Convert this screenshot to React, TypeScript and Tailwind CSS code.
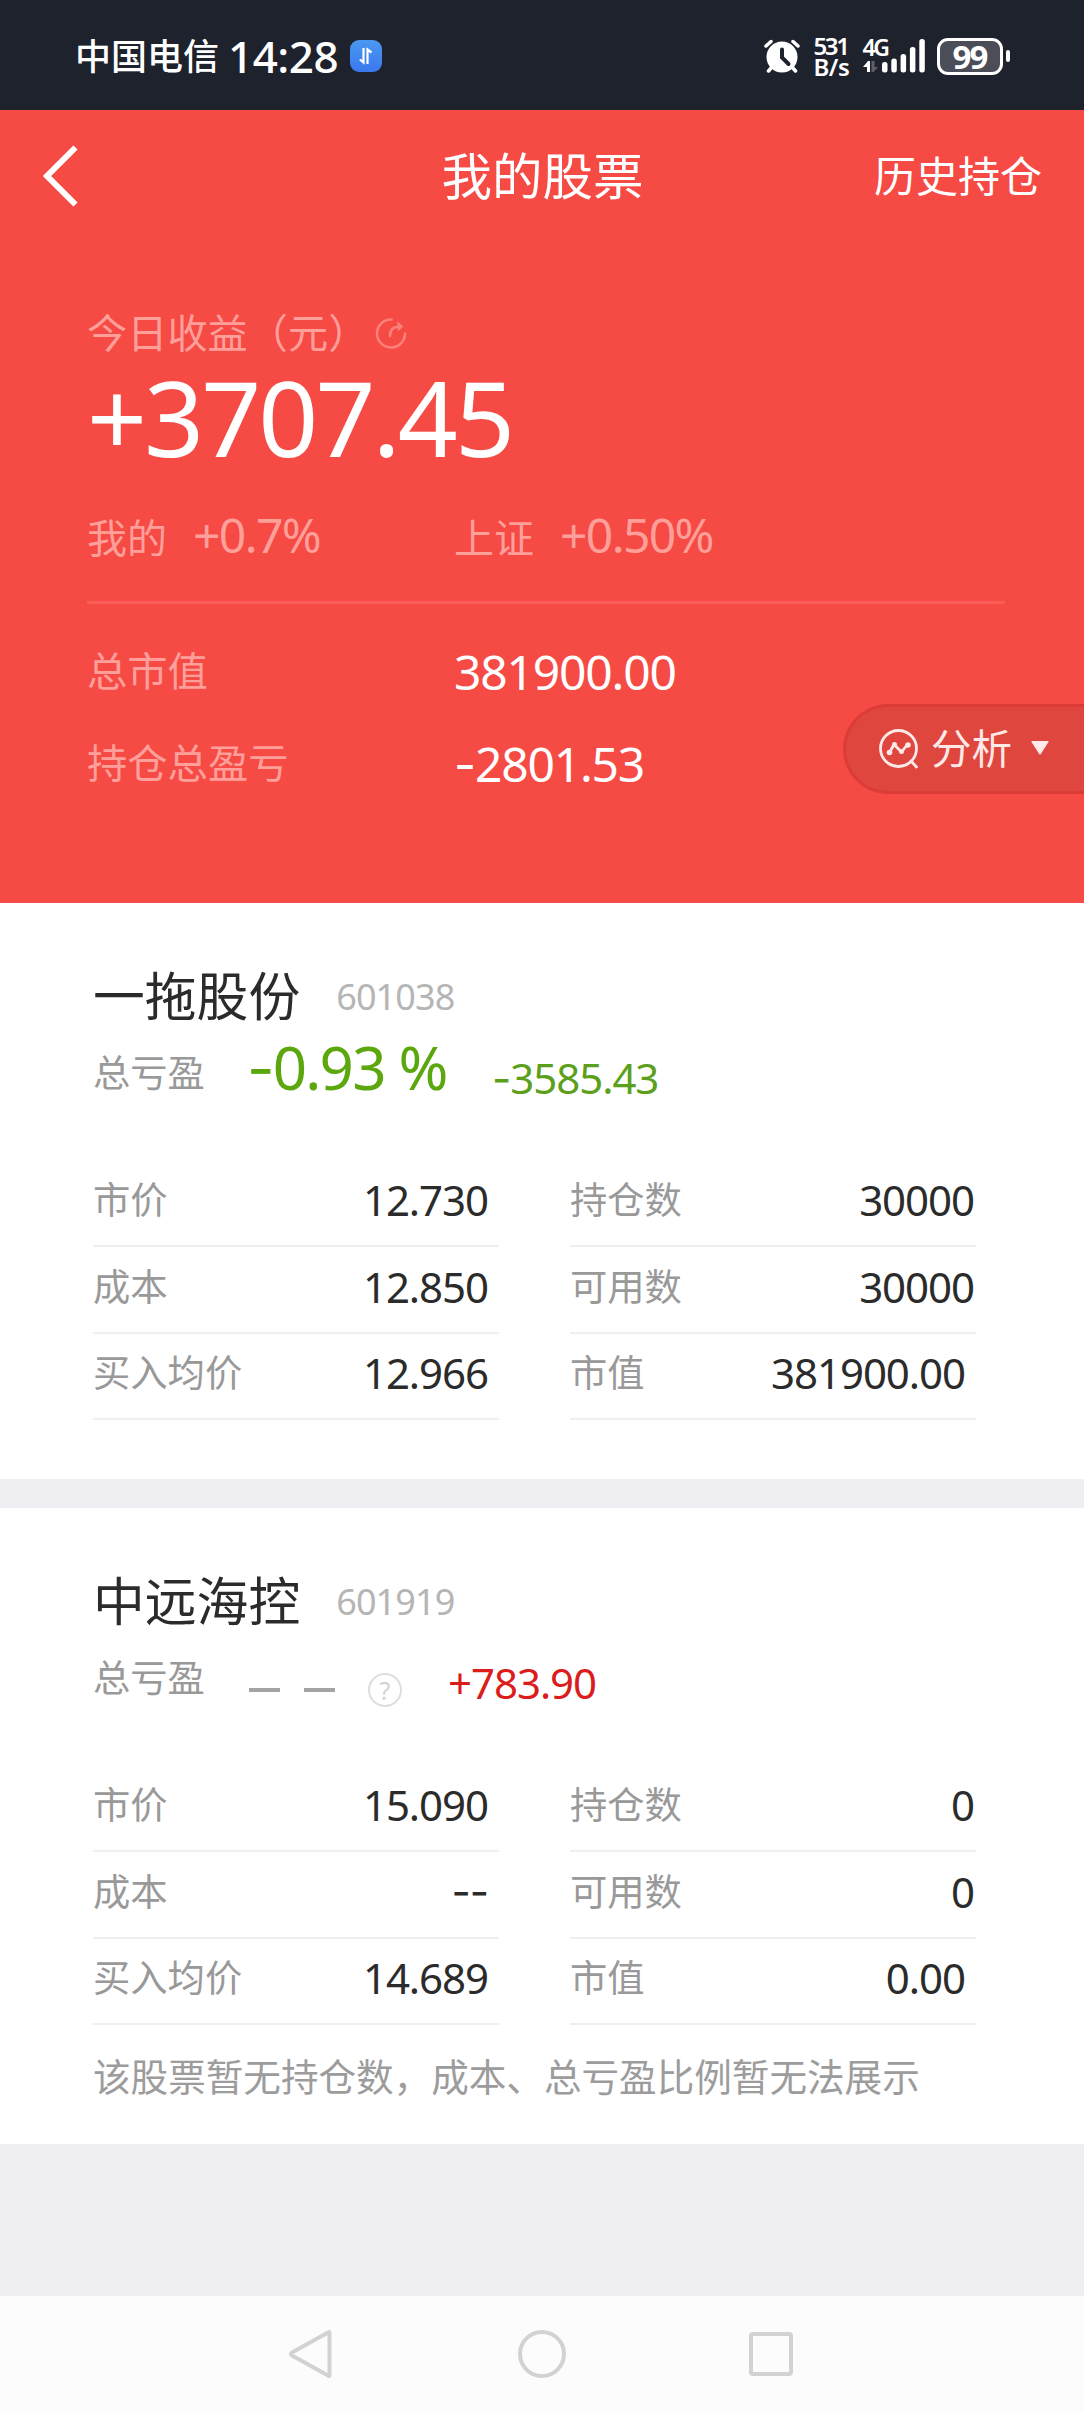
import React from "react";

type Cell = { label: string; value: string; inset?: boolean };

type Stock = {
  name: string;
  code: string;
  ratio: React.ReactNode;
  amount: string;
  amountClass: string;
  left: Cell[];
  right: Cell[];
  note?: string;
};

/** Figure whose minus signs are drawn with a wider, slightly raised dash. */
function Figure({ children }: { children: string }) {
  const dashes = children.match(/^-+/)?.[0] ?? "";
  return (
    <>
      {dashes && <span className="font-['Inter',sans-serif]">{dashes}</span>}
      {children.slice(dashes.length)}
    </>
  );
}

function AlarmIcon() {
  return (
    <svg width="36" height="34" viewBox="0 0 36 34" fill="none" stroke="#fff" strokeLinecap="round">
      <circle cx="18" cy="18" r="15.5" fill="#fff" stroke="none" />
      <path d="M2 7 L7 2.5 M34 7 L29 2.5" strokeWidth="3.5" />
      <path d="M8 28 L4.5 32 M28 28 L31.5 32" strokeWidth="3.5" />
      <path d="M18 10.5 V18.5 L24.5 25" stroke="#1e222c" strokeWidth="4" />
    </svg>
  );
}

function SignalIcon() {
  return (
    <svg width="62" height="34" viewBox="0 0 62 34" fill="#fff">
      <path d="M0 28 L5 22 H7 V33 H4 V28 Z" />
      <path d="M8.5 22 H11.5 V28 H15 L10.5 33 H8.5 Z" fill="#5d606a" />
      <rect x="19" y="23" width="5.5" height="10.500" rx="2.5" />
      <rect x="28.300" y="19.500" width="5.5" height="14" rx="2.5" />
      <rect x="37.600" y="15" width="5.5" height="18.500" rx="2.5" />
      <rect x="46.900" y="8" width="5.5" height="25.500" rx="2.5" />
      <rect x="56.300" y="0" width="5.500" height="33.500" rx="2.5" />
    </svg>
  );
}

function StatusBar() {
  return (
    <div className="flex h-[110px] items-center bg-[#1e222c] pt-[2px] pr-[74px] pl-[75px] text-white">
      <span className="mt-px text-[36px] leading-none font-medium">中国电信</span>
      <span className="ml-[9px] text-[44px] leading-none font-medium tracking-[-0.012em]">14:28</span>
      <span className="ml-[12px] flex size-8 items-center justify-center rounded-[9px] bg-linear-to-b from-[#4b98f0] to-[#3a78ee]">
        <svg width="14" height="18" viewBox="0 0 14 18" fill="none" stroke="#fff" strokeWidth="2.200">
          <path d="M4.500 1 V15.500 L0.800 12.500 M8.500 17 V2.500 L12.500 5.500" />
        </svg>
      </span>
      <div className="ml-auto flex items-center">
        <AlarmIcon />
        <div className="ml-[14px] flex w-[49px] flex-col text-[24px] leading-[21.500px] font-semibold tracking-[-0.1em]">
          <span>531</span>
          <span className="tracking-[-0.02em]">B/s</span>
        </div>
        <div className="relative">
          <SignalIcon />
          <span className="absolute -top-[4px] left-0 text-[23px] leading-6 font-semibold tracking-[-0.1em]">4G</span>
        </div>
        <div className="ml-[12px] flex h-[37px] w-[66px] items-center justify-center rounded-[11px] border-[3px] border-white bg-[#4b4e58] text-[33px] leading-none font-bold tracking-[-0.06em]">
          99
        </div>
        <div className="ml-[3px] h-[12px] w-[4.500px] rounded-full bg-white" />
      </div>
    </div>
  );
}

function SummaryRow({ label, value }: { label: string; value: string }) {
  return (
    <div className="flex h-[56px] items-center">
      <span className="w-[367px] text-[40.300px] leading-[56px] text-[#ff9f9a]">{label}</span>
      <span className="mt-[2px] text-[48px] leading-[56px] tracking-[-0.025em]">
        <Figure>{value}</Figure>
      </span>
    </div>
  );
}

function Rate({ label, value }: { label: string; value: string }) {
  return (
    <div className="flex h-[56px] w-[367px] items-baseline text-[#ff9f9a]">
      <span className="text-[40px] leading-[56px]">{label}</span>
      <span className="ml-[26px] text-[48px] leading-[56px] tracking-[-0.034em]">{value}</span>
    </div>
  );
}

function Summary() {
  return (
    <section className="relative h-[793px] bg-[#f64a45] text-white">
      <header className="grid h-[132px] grid-cols-3 items-center pr-[42px] pl-[43px]">
        <svg width="36" height="62" viewBox="0 0 36 62" fill="none" stroke="#fff" strokeWidth="6">
          <path d="M32.500 2.500 L4 31 L32.500 59.500" />
        </svg>
        <h1 className="justify-self-center text-[50.500px] leading-none whitespace-nowrap">我的股票</h1>
        <span className="justify-self-end text-[42px] leading-none">历史持仓</span>
      </header>
      <div className="px-[87px] pt-[67px]">
        <div className="flex h-[48px] items-center text-[40.200px] leading-[48px] text-[#ff9f9a]">
          <span>今日收益（元）</span>
          <svg className="ml-[6px]" width="34" height="34" viewBox="0 0 34 34" fill="none" stroke="#fb7f7a" strokeWidth="2.600" strokeLinecap="round">
            <path d="M17.500 3.500 A14 14 0 1 0 31 17.500" />
            <path d="M16 20 C16 14 18.500 10.500 27 10.500" />
            <path d="M24 6.500 L29 10.500 L24.500 14.500 Z" fill="#fb7f7a" strokeWidth="1" />
          </svg>
        </div>
        <div className="mt-[8px] h-[104px] text-[105px] leading-[104px] tracking-[-0.028em]">+3707.45</div>
        <div className="mt-[38px] flex">
          <Rate label="我的" value="+0.7%" />
          <Rate label="上证" value="+0.50%" />
        </div>
        <div className="mt-[38px] mr-[-8px] h-[3px] bg-[#fa5c58]" />
        <div className="mt-[39px] flex flex-col gap-[36px]">
          <SummaryRow label="总市值" value="381900.00" />
          <SummaryRow label="持仓总盈亏" value="-2801.53" />
        </div>
      </div>
      <button className="absolute top-[594px] right-0 flex h-[90px] w-[241px] items-center rounded-l-full border-3 border-r-0 border-[#dc3c38] bg-[#df463e] pl-[32px] text-[#fde9e7]">
        <svg width="42" height="42" viewBox="0 0 42 42" fill="none" stroke="currentColor" strokeWidth="2.800" strokeLinecap="round">
          <circle cx="20.500" cy="20.500" r="18" />
          <path d="M33 33 L38.500 39 M11.500 24.500 L16 16.500 L23.500 24 L29.500 16.500" strokeLinejoin="round" />
          <g fill="currentColor" stroke="none">
            <circle cx="11.500" cy="24.500" r="2.800" />
            <circle cx="16.500" cy="16.500" r="2.500" />
            <circle cx="23.500" cy="23.500" r="2.500" />
            <circle cx="30" cy="17" r="2.800" />
          </g>
        </svg>
        <span className="ml-[11px] text-[40.500px] leading-none">分析</span>
        <svg className="ml-[19px] -mt-[3px]" width="18" height="14" viewBox="0 0 18 14" fill="currentColor">
          <path d="M1 0 H17 Q18 0 17.500 1 L9.800 13 Q9 14 8.200 13 L0.500 1 Q0 0 1 0 Z" />
        </svg>
      </button>
    </section>
  );
}

function Column({ cells }: { cells: Cell[] }) {
  return (
    <div className="grid w-[406px] grid-rows-[87px_87px_86px]">
      {cells.map((c) => (
        <div key={c.label} className="flex items-center justify-between border-b-2 border-[#efefef] pb-[6px]">
          <span className="text-[37.300px] leading-none text-[#999]">{c.label}</span>
          <span className={`text-[42px] leading-none tracking-[-0.025em] text-[#2b2b2b] ${c.inset ? "pr-[11px]" : "pr-[2px]"}`}>
            <Figure>{c.value}</Figure>
          </span>
        </div>
      ))}
    </div>
  );
}

function StockCard({ stock, className }: { stock: Stock; className: string }) {
  return (
    <article className={`bg-white px-[93px] pt-[61px] ${className}`}>
      <div className="flex h-[64px] items-center">
        <h2 className="text-[51.800px] leading-[64px] text-[#2b2b2b]">{stock.name}</h2>
        <span className="mt-[2px] ml-[36px] text-[36px] leading-[64px] tracking-[-0.025em] text-[#b5b5b5]">{stock.code}</span>
      </div>
      <div className="mt-[7px] flex h-[64px] items-start leading-[64px]">
        <span className="mt-[6px] w-[154px] text-[37.300px] text-[#999]">总亏盈</span>
        {stock.ratio}
        <span className={`mt-[11px] text-[42px] tracking-[-0.025em] ${stock.amountClass}`}>
          <Figure>{stock.amount}</Figure>
        </span>
      </div>
      <div className="mt-[61px] flex gap-[71px]">
        <Column cells={stock.left} />
        <Column cells={stock.right} />
      </div>
      {stock.note && <p className="mt-[28px] text-[37.600px] leading-[48px] whitespace-nowrap text-[#9c9c9c]">{stock.note}</p>}
    </article>
  );
}

const stocks: Stock[] = [
  {
    name: "一拖股份",
    code: "601038",
    ratio: (
      <span className="w-[245px] text-[60px] tracking-[-0.03em] text-[#5ca60e]">
        <Figure>-0.93 %</Figure>
      </span>
    ),
    amount: "-3585.43",
    amountClass: "text-[#5c9f1d]",
    left: [
      { label: "市价", value: "12.730", inset: true },
      { label: "成本", value: "12.850", inset: true },
      { label: "买入均价", value: "12.966", inset: true },
    ],
    right: [
      { label: "持仓数", value: "30000" },
      { label: "可用数", value: "30000" },
      { label: "市值", value: "381900.00", inset: true },
    ],
  },
  {
    name: "中远海控",
    code: "601919",
    ratio: (
      <div className="mt-[33px] flex w-[201px] items-center pl-[2px]">
        <span className="h-[4px] w-[31px] bg-[#a3a3a3]" />
        <span className="ml-[24px] h-[4px] w-[31px] bg-[#a3a3a3]" />
        <span className="ml-[33px] flex size-[34px] items-center justify-center rounded-full border-2 border-[#dedede] text-[25px] leading-none text-[#d2d2d2]">
          ?
        </span>
      </div>
    ),
    amount: "+783.90",
    amountClass: "text-[#dc1c1c]",
    left: [
      { label: "市价", value: "15.090", inset: true },
      { label: "成本", value: "--", inset: true },
      { label: "买入均价", value: "14.689", inset: true },
    ],
    right: [
      { label: "持仓数", value: "0" },
      { label: "可用数", value: "0" },
      { label: "市值", value: "0.00", inset: true },
    ],
    note: "该股票暂无持仓数，成本、总亏盈比例暂无法展示",
  },
];

function NavBar() {
  return (
    <nav className="mt-auto flex h-[116px] items-center bg-[#fcfcfc] pl-[289px]">
      <svg width="43" height="50" viewBox="0 0 43 50" fill="none" stroke="#d2d2d2" strokeWidth="4" strokeLinejoin="round">
        <path d="M40.500 3.500 V46.500 Q40.500 47.500 39 46.500 L3 26.500 Q1 25 3 23.500 L39 3.500 Q40.500 2.500 40.500 3.500 Z" />
      </svg>
      <span className="ml-[186px] size-[48px] rounded-full border-4 border-[#d2d2d2]" />
      <span className="ml-[183px] size-[44px] rounded-[4px] border-4 border-[#d2d2d2]" />
    </nav>
  );
}

export default function App() {
  return (
    <div className="flex h-[2412px] w-[1084px] flex-col overflow-hidden bg-[#eeeef3] font-['Noto_Sans','Noto_Sans_CJK_SC',sans-serif]">
      <StatusBar />
      <Summary />
      <StockCard stock={stocks[0]} className="h-[576px]" />
      <StockCard stock={stocks[1]} className="mt-[29px] h-[636px]" />
      <NavBar />
    </div>
  );
}
